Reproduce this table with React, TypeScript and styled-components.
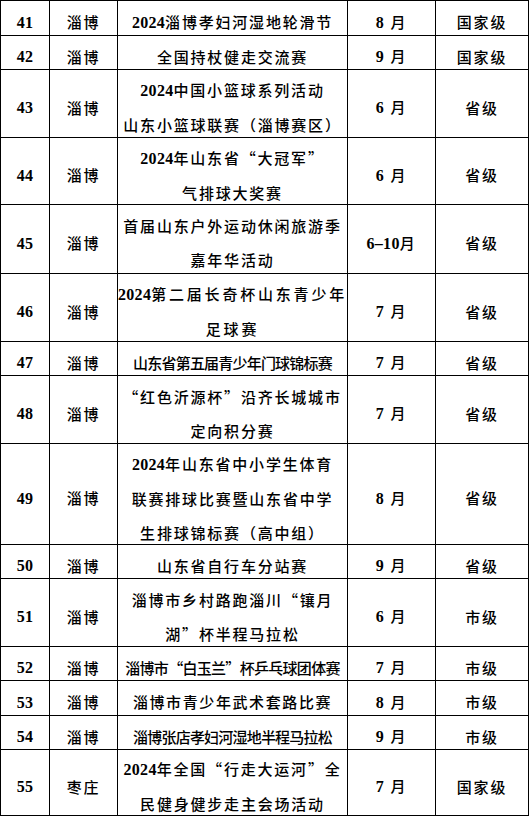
import React from 'react'
import styled, { createGlobalStyle } from 'styled-components'

interface EventRow {
  no: number
  city: string
  name: string[]
  month: string
  level: string
  height: number
  spacing?: number
}

const rows: EventRow[] = [
  { no: 41, city: '淄博', name: ['2024淄博孝妇河湿地轮滑节'], month: '8 月', level: '国家级', height: 35 },
  { no: 42, city: '淄博', name: ['全国持杖健走交流赛'], month: '9 月', level: '国家级', height: 34 },
  {
    no: 43,
    city: '淄博',
    name: ['2024中国小篮球系列活动', '山东小篮球联赛（淄博赛区）'],
    month: '6 月',
    level: '省级',
    height: 68,
  },
  { no: 44, city: '淄博', name: ['2024年山东省“大冠军”', '气排球大奖赛'], month: '6 月', level: '省级', height: 67 },
  {
    no: 45,
    city: '淄博',
    name: ['首届山东户外运动休闲旅游季', '嘉年华活动'],
    month: '6–10月',
    level: '省级',
    height: 69,
  },
  {
    no: 46,
    city: '淄博',
    name: ['2024第二届长奇杯山东青少年', '足球赛'],
    month: '7 月',
    level: '省级',
    height: 68,
    spacing: 2.8,
  },
  { no: 47, city: '淄博', name: ['山东省第五届青少年门球锦标赛'], month: '7 月', level: '省级', height: 34, spacing: -0.8 },
  { no: 48, city: '淄博', name: ['“红色沂源杯”沿齐长城城市', '定向积分赛'], month: '7 月', level: '省级', height: 68 },
  {
    no: 49,
    city: '淄博',
    name: ['2024年山东省中小学生体育', '联赛排球比赛暨山东省中学', '生排球锦标赛（高中组）'],
    month: '8 月',
    level: '省级',
    height: 101,
  },
  { no: 50, city: '淄博', name: ['山东省自行车分站赛'], month: '9 月', level: '省级', height: 34 },
  { no: 51, city: '淄博', name: ['淄博市乡村路跑淄川“镶月', '湖”杯半程马拉松'], month: '6 月', level: '市级', height: 68 },
  { no: 52, city: '淄博', name: ['淄博市“白玉兰”杯乒乓球团体赛'], month: '7 月', level: '市级', height: 34, spacing: -0.7 },
  { no: 53, city: '淄博', name: ['淄博市青少年武术套路比赛'], month: '8 月', level: '市级', height: 35, spacing: 1.6 },
  { no: 54, city: '淄博', name: ['淄博张店孝妇河湿地半程马拉松'], month: '9 月', level: '市级', height: 34, spacing: -0.8 },
  {
    no: 55,
    city: '枣庄',
    name: ['2024年全国“行走大运河”全', '民健身健步走主会场活动'],
    month: '7 月',
    level: '国家级',
    height: 66,
  },
]

const GlobalStyle = createGlobalStyle`
  html, body {
    margin: 0;
    padding: 0;
    background: #fff;
  }
  body {
    color: #000;
    font-family: 'Noto Sans CJK SC', sans-serif;
  }
`

const Table = styled.div`
  box-sizing: border-box;
  width: 529px;
  border-left: 1px solid #000;
  border-top: 1px solid #000;
`

const Row = styled.div<{ $height: number }>`
  display: grid;
  grid-template-columns: 49px 68px 230px 88px 93px;
  grid-template-rows: 100%;
  height: ${({ $height }) => $height}px;
`

const Cell = styled.div<{ $spacing?: number }>`
  box-sizing: border-box;
  display: flex;
  flex-direction: column;
  justify-content: center;
  align-items: center;
  min-height: 0;
  padding-top: 8px;
  border-right: 1px solid #000;
  border-bottom: 1px solid #000;
  font-size: 15px;
  font-weight: 500;
  line-height: 34px;
  letter-spacing: ${({ $spacing }) => $spacing ?? 1.8}px;
  white-space: nowrap;
  font-feature-settings: 'fwid' 1;
`

const Line = styled.div`
  flex: none;
`

// latin digits (and the space after them) are set in a bold serif
const Num = styled.span`
  font-family: 'Liberation Serif', serif;
  font-weight: 700;
  font-size: 16px;
  letter-spacing: 0.3px;
  word-spacing: 2px;
  white-space: pre;
`

const withNumbers = (text: string) =>
  text.split(/([0-9]+(?:–[0-9]+)? ?)/).map((part, i) =>
    /^[0-9]/.test(part) ? <Num key={i}>{part}</Num> : <React.Fragment key={i}>{part}</React.Fragment>,
  )

export default function App() {
  return (
    <>
      <GlobalStyle />
      <Table>
        {rows.map((row) => (
          <Row key={row.no} $height={row.height}>
            <Cell>
              <Line>
                <Num>{row.no}</Num>
              </Line>
            </Cell>
            <Cell>
              <Line>{row.city}</Line>
            </Cell>
            <Cell $spacing={row.spacing}>
              {row.name.map((line, i) => (
                <Line key={i}>{withNumbers(line)}</Line>
              ))}
            </Cell>
            <Cell>
              <Line>{withNumbers(row.month)}</Line>
            </Cell>
            <Cell>
              <Line>{row.level}</Line>
            </Cell>
          </Row>
        ))}
      </Table>
    </>
  )
}
